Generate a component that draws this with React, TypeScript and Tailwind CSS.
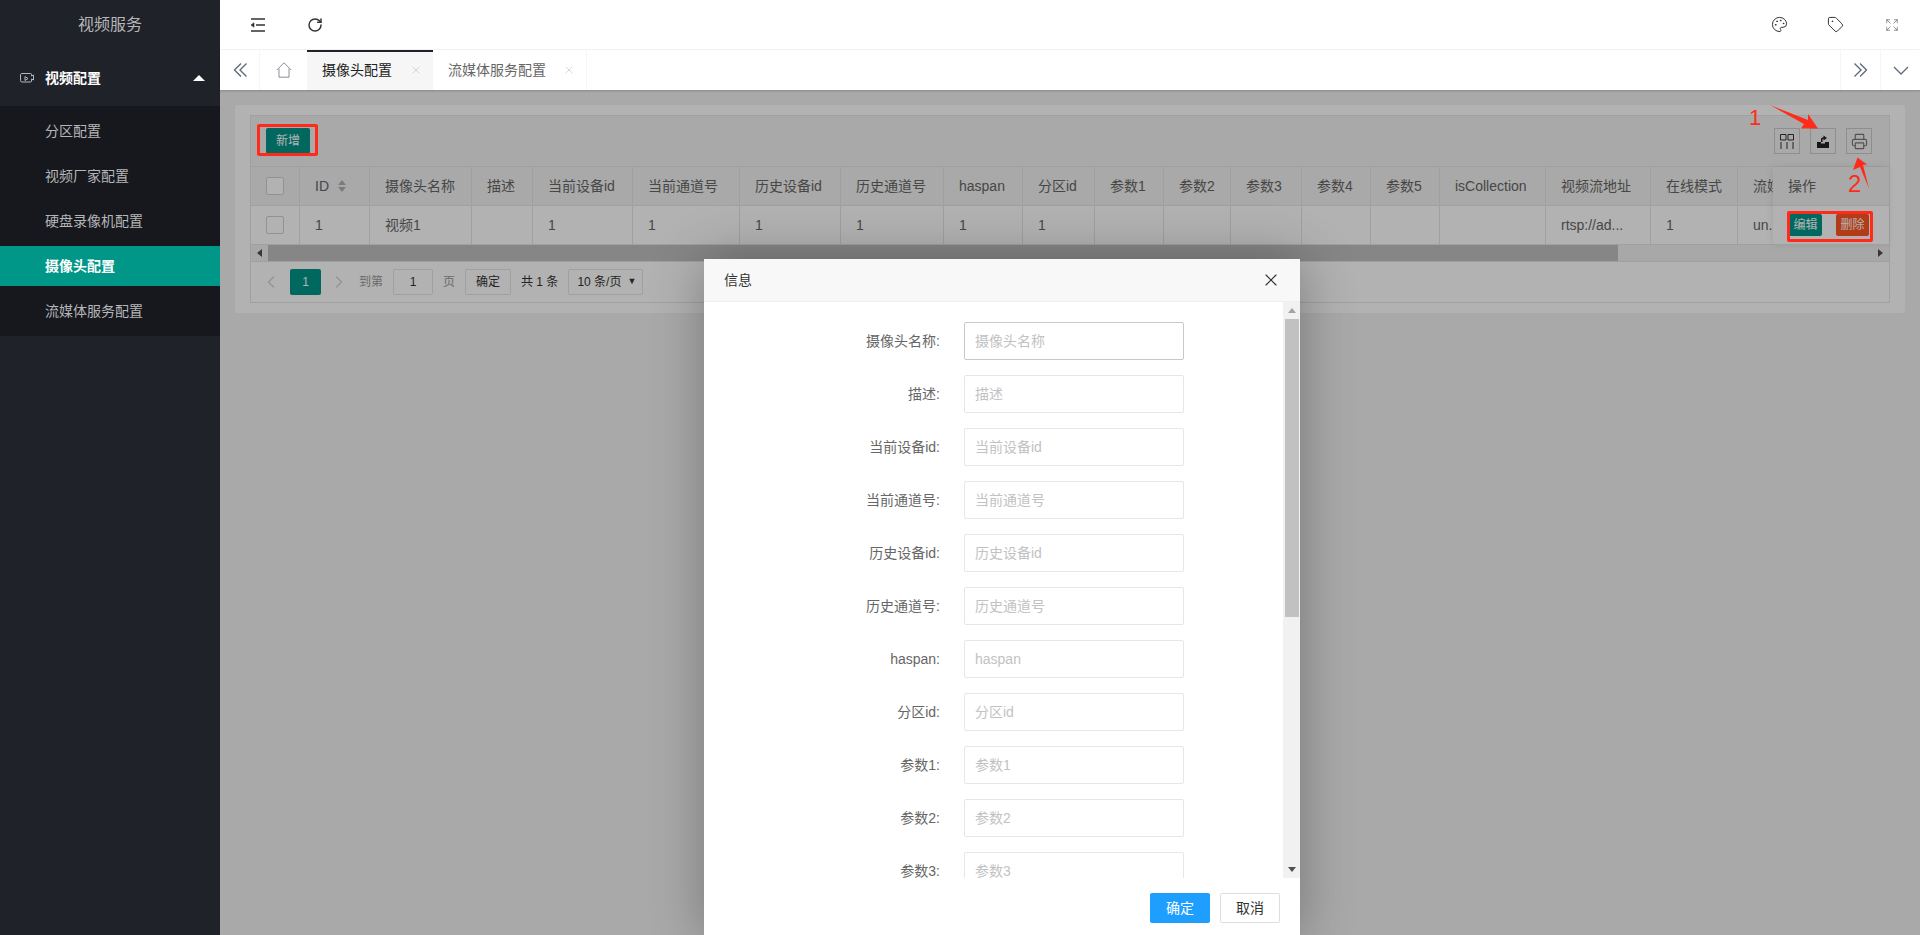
import { ChevronLeft, ChevronRight, Expand, Palette, Printer, RotateCw, Tag, X } from "lucide-react";

const subMenus = ["分区配置", "视频厂家配置", "硬盘录像机配置", "摄像头配置", "流媒体服务配置"];

// widths measured per column, the last one runs under the fixed 操作 column
const columns = [
  { title: "摄像头名称", value: "视频1", w: "w-[102px]" },
  { title: "描述", value: "", w: "w-[61px]" },
  { title: "当前设备id", value: "1", w: "w-[100px]" },
  { title: "当前通道号", value: "1", w: "w-[107px]" },
  { title: "历史设备id", value: "1", w: "w-[101px]" },
  { title: "历史通道号", value: "1", w: "w-[103px]" },
  { title: "haspan", value: "1", w: "w-[79px]" },
  { title: "分区id", value: "1", w: "w-[72px]" },
  { title: "参数1", value: "", w: "w-[69px]" },
  { title: "参数2", value: "", w: "w-[67px]" },
  { title: "参数3", value: "", w: "w-[71px]" },
  { title: "参数4", value: "", w: "w-[69px]" },
  { title: "参数5", value: "", w: "w-[69px]" },
  { title: "isCollection", value: "", w: "w-[106px]" },
  { title: "视频流地址", value: "rtsp://ad...", w: "w-[105px]" },
  { title: "在线模式", value: "1", w: "w-[87px]" },
  { title: "流媒体", value: "un...", w: "w-[120px]" },
];

const fields = ["摄像头名称", "描述", "当前设备id", "当前通道号", "历史设备id", "历史通道号", "haspan", "分区id", "参数1", "参数2", "参数3"];

function Checkbox() {
  return <div className="w-[18px] h-[18px] bg-white border border-[#d2d2d2] rounded-[2px]" />;
}

function Cell({ w, children }: { w: string; children?: React.ReactNode }) {
  return (
    <div className={`${w} shrink-0 h-full px-[15px] flex items-center whitespace-nowrap border-r border-[#e6e6e6] overflow-hidden`}>
      {children}
    </div>
  );
}

function ToolButton({ children }: { children: React.ReactNode }) {
  return (
    <div className="w-[26px] h-[26px] border border-[#ccc] flex items-center justify-center text-[#333]">
      {children}
    </div>
  );
}

function DoubleArrow({ right }: { right?: boolean }) {
  return (
    <svg width="16" height="16" viewBox="0 0 16 16" fill="none" stroke="#5f6b7a" strokeWidth="1.4">
      {right ? (
        <path d="M1.5 1.5 8 8l-6.500 6.500M7 1.500 13.500 8 7 14.500" />
      ) : (
        <path d="M14.500 1.500 8 8l6.500 6.500M9 1.500 2.500 8 9 14.500" />
      )}
    </svg>
  );
}

export default function App() {
  return (
    <div className="relative flex w-[1920px] h-[935px] overflow-hidden bg-[#f2f2f2] text-[14px] text-[#666] [font-family:'Liberation_Sans','Noto_Sans_CJK_SC',sans-serif]">
      {/* Sidebar */}
      <aside className="w-[220px] shrink-0 bg-[#20222a] z-10">
        <div className="h-[50px] flex items-center justify-center text-[16px] text-[#b5b6b8]">视频服务</div>
        <div className="h-[56px] flex items-center pl-[20px] pr-[15px] text-white font-bold">
          <svg width="14" height="11" viewBox="0 0 14 11" fill="none" stroke="#b5b6b8" className="mr-[11px]">
            <path d="M2 .5h8.500a1 1 0 0 1 1 1v1.500l2-1v5l-2-1v2a1 1 0 0 1-1 1H2a1.500 1.500 0 0 1-1.500-1.500v-6A1.500 1.500 0 0 1 2 .5z" />
            <path d="M5 3.500v4l3-2z" />
          </svg>
          <span className="flex-1">视频配置</span>
          <svg width="12" height="6" viewBox="0 0 12 6" fill="#fff"><path d="M6 0l6 6H0z" /></svg>
        </div>
        <div className="bg-[#16181e] py-[5px]">
          {subMenus.map((name, i) => (
            <div
              key={name}
              className={`h-[40px] my-[5px] first:mt-0 last:mb-0 flex items-center pl-[45px] ${
                i === 3 ? "bg-[#009688] text-white font-bold" : "text-[#b5b6b8]"
              }`}
            >
              {name}
            </div>
          ))}
        </div>
      </aside>

      <div className="flex-1 min-w-0 flex flex-col">
        {/* Top bar */}
        <header className="relative z-10 h-[50px] shrink-0 bg-white border-b border-[#f6f6f6] flex items-center text-[#333]">
          <svg width="16" height="14" viewBox="0 0 16 14" fill="none" stroke="#333" strokeWidth="1.4" className="ml-[30px]">
            <path d="M1 1h14M6 7h9M1 13h14" />
            <path d="M1 7l3-2.200v4.400z" fill="#333" strokeWidth="0.6" />
          </svg>
          <RotateCw size={16} strokeWidth={2.2} className="ml-[41px]" />
          <div className="flex-1" />
          <Palette size={17} strokeWidth={1.4} />
          <Tag size={17} strokeWidth={1.4} className="ml-[39px]" />
          <Expand size={14} strokeWidth={1.2} className="ml-[41px] mr-[21px] text-[#666]" />
        </header>

        {/* Tabs */}
        <div className="relative z-10 h-[40px] shrink-0 bg-white flex shadow-[0_1px_2px_rgba(0,0,0,0.2)]">
          <div className="w-[40px] flex items-center justify-center border-r border-[#f6f6f6]">
            <DoubleArrow />
          </div>
          <div className="w-[47px] flex items-center justify-center">
            <svg width="16" height="16" viewBox="0 0 16 16" fill="none" stroke="#8a8f99">
              <path d="M.8 8 8 .8 15.200 8M3 6.500v8.700h10V6.500" />
            </svg>
          </div>
          <div className="w-[126px] bg-[#f6f6f6] border-t-2 border-[#20222a] flex items-center pl-[15px] text-[#222]">
            <span className="flex-1 -mt-[2px]">摄像头配置</span>
            <X size={12} strokeWidth={1.3} className="mr-[11px] -mt-[2px] text-[#c2c2c2]" />
          </div>
          <div className="w-[154px] flex items-center pl-[15px] border-r border-[#f6f6f6]">
            <span className="flex-1">流媒体服务配置</span>
            <X size={12} strokeWidth={1.3} className="mr-[11px] text-[#c2c2c2]" />
          </div>
          <div className="flex-1" />
          <div className="w-[40px] flex items-center justify-center border-l border-[#f6f6f6]">
            <DoubleArrow right />
          </div>
          <div className="w-[40px] flex items-center justify-center border-l border-[#f6f6f6]">
            <svg width="16" height="9" viewBox="0 0 16 9" fill="none" stroke="#5f6b7a" strokeWidth="1.3">
              <path d="M1 1l7 7 7-7" />
            </svg>
          </div>
        </div>

        {/* Content */}
        <main className="relative flex-1 p-[15px]">
          <div className="bg-white rounded-[2px] px-[15px] py-[10px]">
            <div className="border border-[#e6e6e6]">
              <div className="h-[51px] bg-[#f2f2f2] border-b border-[#e6e6e6] flex items-center pl-[15px] pr-[17px]">
                <button className="w-[44px] h-[26px] bg-[#009688] text-white text-[12px] rounded-[2px]">新增</button>
                <div className="flex-1" />
                <div className="flex gap-[10px]">
                  <ToolButton>
                    <svg width="14" height="15" viewBox="0 0 14 15" fill="none" stroke="#333">
                      <path d="M.5.500h5.500v5.500H.5zM8 .5h5.500v5.500H8zM1 8v7M7 8v7M13 8v7" />
                    </svg>
                  </ToolButton>
                  <ToolButton>
                    <svg width="14" height="14" viewBox="0 0 14 14" fill="#222">
                      <path d="M1 8h4v1.500h4V8h4v6H1z" />
                      <path d="M5 8V5.500c0-1.300 1-2.200 2.500-2.200V1.500L11 4 7.500 6.500V4.800C6.700 4.800 6.500 5.300 6.500 6v2z" />
                    </svg>
                  </ToolButton>
                  <ToolButton>
                    <Printer size={17} strokeWidth={1.6} className="text-[#777]" />
                  </ToolButton>
                </div>
              </div>

              <div className="flex">
                <div className="flex-1 min-w-0 overflow-hidden">
                  <div className="flex h-[39px] bg-[#f2f2f2] border-b border-[#e6e6e6]">
                    <Cell w="w-[49px]"><Checkbox /></Cell>
                    <Cell w="w-[70px]">
                      ID
                      <svg width="10" height="14" viewBox="0 0 10 14" fill="#b2b2b2" className="ml-[8px]">
                        <path d="M5 1l4 5H1zM5 13 1 8h8z" />
                      </svg>
                    </Cell>
                    {columns.map((c) => (
                      <Cell key={c.title} w={c.w}>{c.title}</Cell>
                    ))}
                  </div>
                  <div className="flex h-[39px] border-b border-[#e6e6e6]">
                    <Cell w="w-[49px]"><Checkbox /></Cell>
                    <Cell w="w-[70px]">1</Cell>
                    {columns.map((c) => (
                      <Cell key={c.title} w={c.w}>{c.value}</Cell>
                    ))}
                  </div>
                </div>
                <div className="w-[116px] shrink-0 shadow-[-1px_0_8px_rgba(0,0,0,0.08)]">
                  <div className="h-[39px] bg-[#f2f2f2] border-b border-[#e6e6e6] flex items-center pl-[15px]">操作</div>
                  <div className="h-[39px] border-b border-[#e6e6e6] flex items-center pl-[16px] gap-[14px]">
                    <button className="w-[33px] h-[22px] bg-[#009688] text-white text-[12px] rounded-[2px]">编辑</button>
                    <button className="w-[33px] h-[22px] bg-[#ff5722] text-white text-[12px] rounded-[2px]">删除</button>
                  </div>
                </div>
              </div>

              {/* Horizontal scrollbar */}
              <div className="h-[17px] bg-[#f1f1f1] border-b border-[#e6e6e6] flex items-center">
                <div className="w-[17px] flex justify-center">
                  <svg width="5" height="8" viewBox="0 0 5 8" fill="#505050"><path d="M0 4l5-4v8z" /></svg>
                </div>
                <div className="w-[1350px] h-full bg-[#c1c1c1]" />
                <div className="flex-1" />
                <div className="w-[17px] flex justify-center">
                  <svg width="5" height="8" viewBox="0 0 5 8" fill="#505050"><path d="M5 4 0 0v8z" /></svg>
                </div>
              </div>

              {/* Pager */}
              <div className="h-[40px] flex items-center text-[12px]">
                <ChevronLeft size={20} strokeWidth={1.5} className="ml-[10px] mr-[9px] text-[#d2d2d2]" />
                <div className="w-[31px] h-[26px] bg-[#009688] text-white rounded-[2px] flex items-center justify-center">1</div>
                <ChevronRight size={20} strokeWidth={1.5} className="ml-[8px] text-[#d2d2d2]" />
                <span className="ml-[10px] text-[#999]">到第</span>
                <div className="ml-[10px] w-[40px] h-[26px] bg-white border border-[#e6e6e6] rounded-[2px] flex items-center justify-center text-[#333]">1</div>
                <span className="ml-[10px] text-[#999]">页</span>
                <button className="ml-[10px] w-[46px] h-[26px] bg-white border border-[#e6e6e6] rounded-[2px] text-[#333]">确定</button>
                <span className="ml-[10px] text-[#333]">共 1 条</span>
                <div className="ml-[10px] w-[75px] h-[26px] bg-white border border-[#e6e6e6] rounded-[2px] flex items-center justify-between pl-[8px] pr-[6px] text-[#333]">
                  <span>10 条/页</span>
                  <span className="text-[9px]">▼</span>
                </div>
              </div>
            </div>
          </div>

          {/* Dialog shade */}
          <div className="absolute inset-0 bg-black/30" />
        </main>
      </div>

      {/* Dialog */}
      <div className="absolute z-20 left-[704px] top-[259px] w-[596px] bg-white shadow-[1px_1px_50px_rgba(0,0,0,0.3)]">
        <div className="h-[43px] bg-[#f8f8f8] border-b border-[#eee] flex items-center pl-[20px] pr-[19px] text-[#333]">
          <span className="flex-1">信息</span>
          <X size={20} strokeWidth={1.4} />
        </div>
        <div className="h-[576px] flex">
          <div className="flex-1 overflow-hidden pt-[20px]">
            {fields.map((name) => (
              <div key={name} className="flex h-[38px] mb-[15px]">
                <label className="w-[236px] leading-[38px] text-right">{name}:</label>
                <input
                  placeholder={name}
                  className={`ml-[24px] w-[220px] h-[38px] px-[10px] bg-white border rounded-[2px] outline-none placeholder:text-[#c2c2c2] ${
                    name === "摄像头名称" ? "border-[#c9c9c9]" : "border-[#e6e6e6]"
                  }`}
                />
              </div>
            ))}
          </div>
          {/* Vertical scrollbar */}
          <div className="w-[17px] shrink-0 bg-[#f1f1f1] flex flex-col items-center">
            <div className="h-[17px] flex items-center">
              <svg width="8" height="5" viewBox="0 0 8 5" fill="#a3a3a3"><path d="M4 0l4 5H0z" /></svg>
            </div>
            <div className="w-[14px] h-[298px] bg-[#c1c1c1]" />
            <div className="flex-1" />
            <div className="h-[17px] flex items-center">
              <svg width="8" height="5" viewBox="0 0 8 5" fill="#505050"><path d="M4 5 0 0h8z" /></svg>
            </div>
          </div>
        </div>
        <div className="h-[60px] flex justify-end gap-[10px] pt-[15px] pr-[20px]">
          <button className="w-[60px] h-[30px] bg-[#1e9fff] text-white rounded-[2px]">确定</button>
          <button className="w-[60px] h-[30px] bg-white border border-[#dedede] text-[#333] rounded-[2px]">取消</button>
        </div>
      </div>

      {/* Red annotations drawn over the screenshot */}
      <div className="absolute z-30 left-[257px] top-[124px] w-[61px] h-[32px] border-[3px] border-[#ff2a1a] rounded-[2px]" />
      <div className="absolute z-30 left-[1787px] top-[211px] w-[86px] h-[31px] border-[3px] border-[#ff2a1a] rounded-[2px]" />
      <span className="absolute z-30 left-[1749px] top-[106px] text-[22px] leading-[24px] text-[#ff2a1a]">1</span>
      <span className="absolute z-30 left-[1848px] top-[172px] text-[24px] leading-[24px] text-[#ff2a1a]">2</span>
      <svg className="absolute z-30 left-[1760px] top-[100px]" width="120" height="100" viewBox="1760 100 120 100" fill="#ff2a1a">
        <path d="M1770 105 1808 120 1808 114 1818 128.500 1801 128.500 1804 124z" />
        <path d="M1857.500 157.500 1867 164.500 1863 165 1869 188.500 1860 167 1853 170z" />
      </svg>
    </div>
  );
}
